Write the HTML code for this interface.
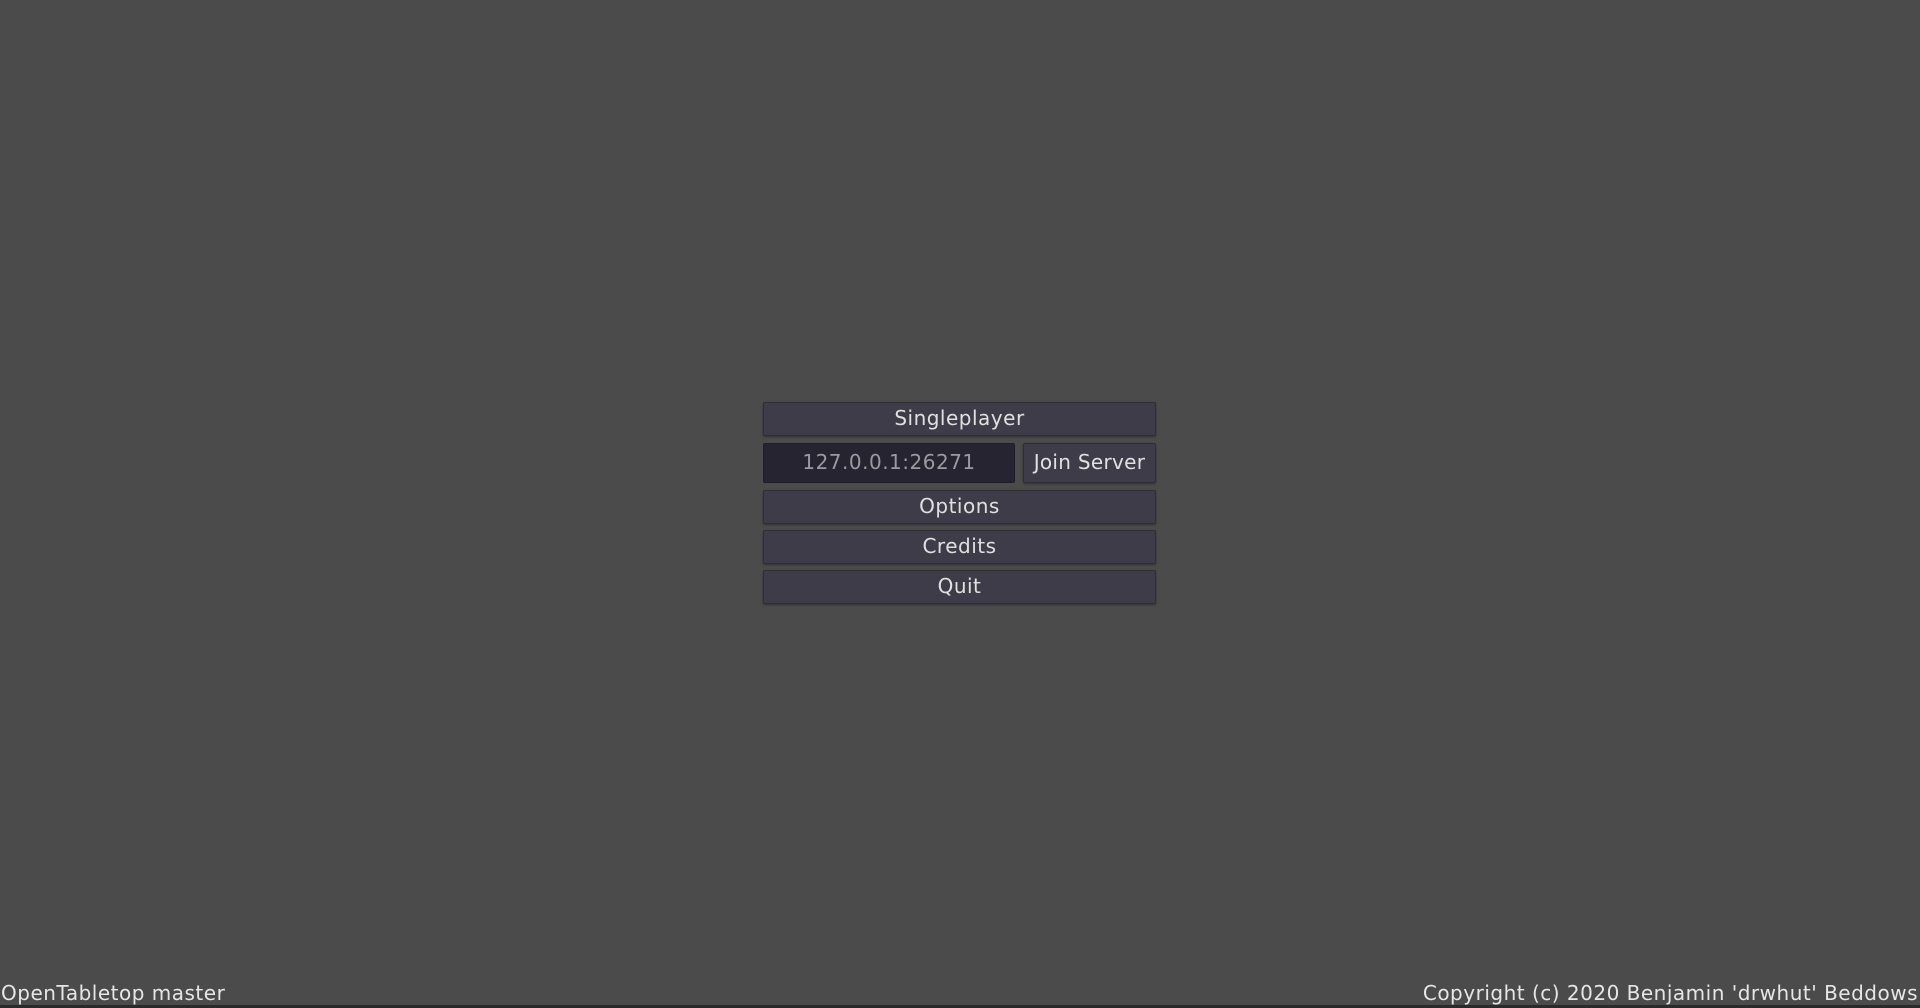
<!DOCTYPE html>
<html><head><meta charset="utf-8"><style>
html,body{margin:0;padding:0;width:1920px;height:1008px;overflow:hidden;background:#4b4b4b;font-family:"DejaVu Sans","Liberation Sans",sans-serif;}
.b{position:absolute;box-sizing:border-box;background:#3e3c48;border:1px solid #2f2e35;box-shadow:0 1px 2px rgba(0,0,0,.35);border-radius:2px;color:#e0e0e0;font-size:20px;text-align:center;letter-spacing:0.5px;}
.e{position:absolute;box-sizing:border-box;background:#262430;border:1px solid #1f1e24;border-radius:2px;color:#9a9aa0;font-size:20px;text-align:center;letter-spacing:0.5px;}
.t{position:absolute;color:#e6e6e6;font-size:20px;white-space:nowrap;letter-spacing:0.5px;}
</style></head><body>
<div class="b" style="left:763px;top:402px;width:393px;height:34px;line-height:31px;">Singleplayer</div>
<div class="e" style="left:763px;top:443px;width:252px;height:40px;line-height:37px;">127.0.0.1:26271</div>
<div class="b" style="left:1023px;top:443px;width:133px;height:40px;line-height:37px;letter-spacing:0.3px;">Join Server</div>
<div class="b" style="left:763px;top:490px;width:393px;height:34px;line-height:31px;">Options</div>
<div class="b" style="left:763px;top:530px;width:393px;height:34px;line-height:31px;">Credits</div>
<div class="b" style="left:763px;top:570px;width:393px;height:34px;line-height:31px;">Quit</div>
<div class="t" style="left:1px;top:981px;line-height:24px;">OpenTabletop master</div>
<div class="t" style="right:2px;top:981px;line-height:24px;">Copyright (c) 2020 Benjamin 'drwhut' Beddows</div>
<div style="position:absolute;left:0;top:1005px;width:1920px;height:3px;background:#2a2a2a;"></div>
</body></html>
